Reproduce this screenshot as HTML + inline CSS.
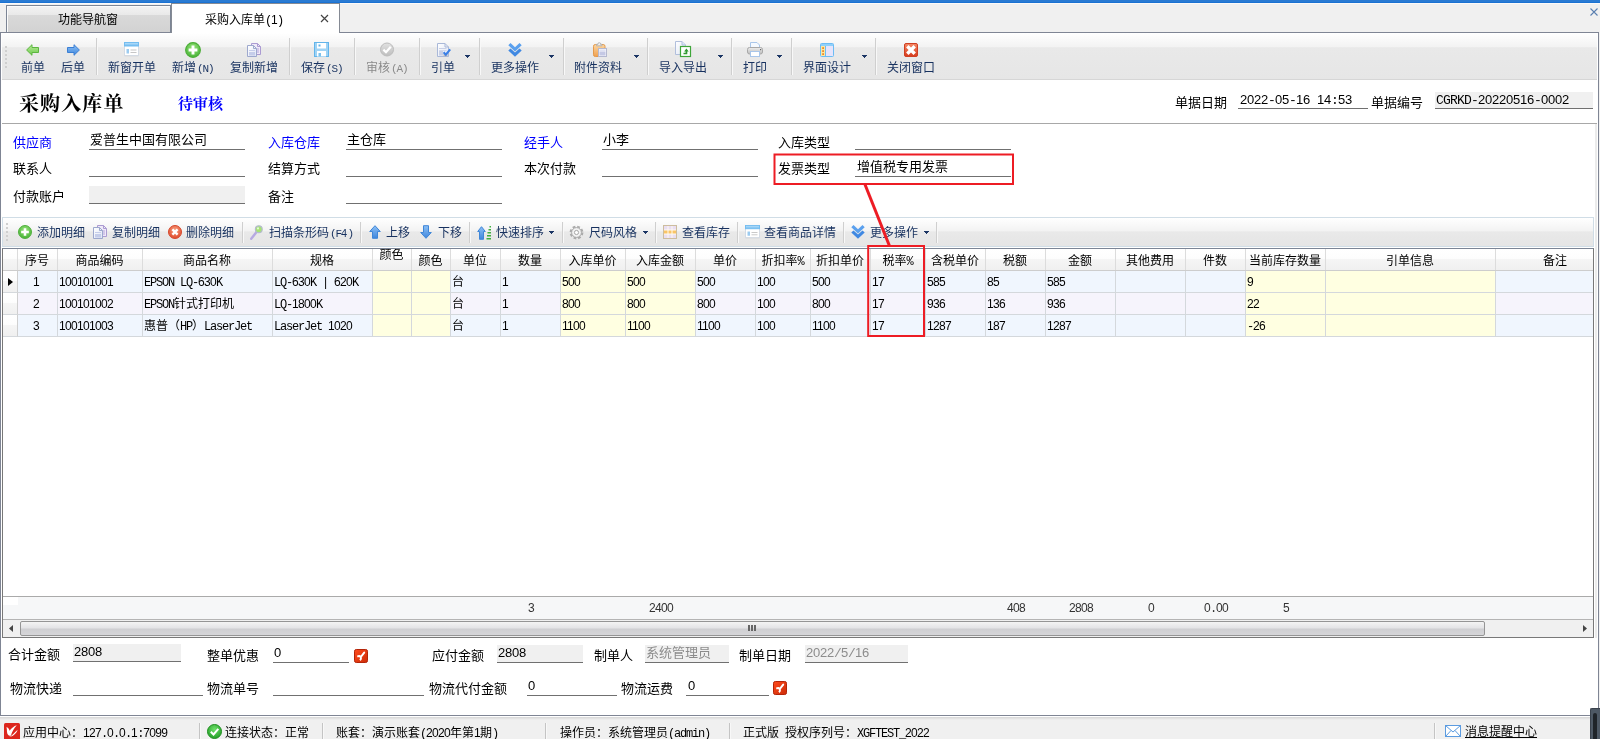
<!DOCTYPE html>
<html lang="zh-CN"><head><meta charset="utf-8"><title>采购入库单</title><style>
*{box-sizing:border-box;margin:0;padding:0}
html,body{width:1600px;height:739px;overflow:hidden}
body{background:#f0f0f0;position:relative;will-change:transform;font-family:"Liberation Sans","Noto Sans CJK SC","WenQuanYi Zen Hei",sans-serif;font-size:12px;color:#000;line-height:14px}
.a{position:absolute;white-space:nowrap}
.n{font-family:"Liberation Mono","DejaVu Sans Mono",monospace;letter-spacing:-1.2px}
.d{font-family:"Liberation Sans",sans-serif;letter-spacing:-0.67px}
.f13{font-size:13px;line-height:15px}
.f13 .d{letter-spacing:-0.23px}
.f13 .n{letter-spacing:-0.8px}
.tb{color:#17315f}
.tb .n{font-size:11px;letter-spacing:-1.1px;margin-left:1px}
.tb .d{font-size:11px;letter-spacing:-0.6px}
.sep{position:absolute;width:1px;background:#cfcfcf;border-right:0}
.sep:after{content:"";position:absolute;left:1px;top:0;width:1px;height:100%;background:#f8f8f8}
.ul{position:absolute;height:1px;background:#707070}
.gf{position:absolute;background:#f0f0f0}
.dd{position:absolute;width:5px;height:1px;background:#1b3564}
.dd:before{content:"";position:absolute;left:1px;top:1px;width:3px;height:1px;background:#1b3564}
.dd:after{content:"";position:absolute;left:2px;top:2px;width:1px;height:1px;background:#1b3564}
.blue{color:#0000ff}
svg{position:absolute;overflow:visible}
.hd{position:absolute;top:0;height:21px;text-align:center;line-height:24px;border-right:1px solid #dcdcdc;overflow:visible;white-space:nowrap}
.c{position:absolute;height:22px;line-height:23px;border-right:1px solid #d4d8dc;border-bottom:1px solid #d4d8dc;padding-left:1px;white-space:nowrap;overflow:hidden}
</style></head><body>
<div class="a" style="left:0;top:0;width:1600px;height:3px;background:linear-gradient(#2a7bd3 0,#2a7bd3 66%,#1a72d2 67%)"></div>
<div class="a" style="left:0;top:3px;width:1600px;height:1px;background:#fdfaf8"></div>
<svg style="left:1590px;top:8px" width="8" height="8" viewBox="0 0 8 8"><path d="M0.5 0.5L7.5 7.5M7.5 0.5L0.5 7.5" stroke="#5a7fb0" stroke-width="1.1" fill="none"/></svg>
<div class="a" style="left:6px;top:5px;width:165px;height:28px;border:1px solid #7c8595;border-bottom:0;background:linear-gradient(#f3f3f3 0,#e9e9e9 32%,#d9d9d9 33%,#d2d2d2 100%);box-shadow:inset 1px 1px 0 #fbfbfb"></div>
<div class="a" style="left:58px;top:13px;">功能导航窗</div>
<div class="a" style="left:0;top:32px;width:1599px;height:684px;background:#fff;border:1px solid #7f8594"></div>
<div class="a" style="left:171px;top:3px;width:169px;height:30px;border:1px solid #858a94;border-bottom:0;background:#fff"></div>
<div class="a" style="left:205px;top:13px;">采购入库单<span class="n">(</span><span class="d">1</span><span class="n">)</span></div>
<svg style="left:320px;top:14px" width="9" height="9" viewBox="0 0 9 9"><path d="M1 1L8 8M8 1L1 8" stroke="#444" stroke-width="1.2" fill="none"/></svg>
<div class="a" style="left:2px;top:33px;width:1595px;height:47px;background:linear-gradient(#ffffff 0,#f3f3f3 30%,#e9e9e9 32%,#e6e6e6 100%);border-bottom:1px solid #d6d6d6"></div>
<div class="a" style="left:5px;top:46px;width:2px;height:2px;background:#cfcfcf"></div>
<div class="a" style="left:5px;top:50px;width:2px;height:2px;background:#cfcfcf"></div>
<div class="a" style="left:5px;top:54px;width:2px;height:2px;background:#cfcfcf"></div>
<div class="a" style="left:5px;top:58px;width:2px;height:2px;background:#cfcfcf"></div>
<div class="a" style="left:5px;top:62px;width:2px;height:2px;background:#cfcfcf"></div>
<div class="a" style="left:5px;top:66px;width:2px;height:2px;background:#cfcfcf"></div>
<svg style="left:0;top:0" width="0" height="0"><defs>
<linearGradient id="gGreen" x1="0" y1="0" x2="0" y2="1"><stop offset="0" stop-color="#b9ec9a"/><stop offset="1" stop-color="#6cc84a"/></linearGradient>
<linearGradient id="gBlue" x1="0" y1="0" x2="0" y2="1"><stop offset="0" stop-color="#8cc0f6"/><stop offset="1" stop-color="#3f86dc"/></linearGradient>
<radialGradient id="gAdd" cx="0.5" cy="0.35" r="0.7"><stop offset="0" stop-color="#9be57e"/><stop offset="1" stop-color="#3fae30"/></radialGradient>
<radialGradient id="gDel" cx="0.5" cy="0.35" r="0.7"><stop offset="0" stop-color="#f9a080"/><stop offset="1" stop-color="#dd4426"/></radialGradient>
<radialGradient id="gOk" cx="0.5" cy="0.35" r="0.7"><stop offset="0" stop-color="#6fe06a"/><stop offset="1" stop-color="#1f9a24"/></radialGradient>
<linearGradient id="gGray" x1="0" y1="0" x2="0" y2="1"><stop offset="0" stop-color="#e2e2e2"/><stop offset="1" stop-color="#bdbdbd"/></linearGradient>
<linearGradient id="gSky" x1="0" y1="0" x2="0" y2="1"><stop offset="0" stop-color="#bfe3fb"/><stop offset="1" stop-color="#6db9ef"/></linearGradient>
<linearGradient id="gOrange" x1="0" y1="0" x2="0" y2="1"><stop offset="0" stop-color="#fbd7a4"/><stop offset="1" stop-color="#f0a04e"/></linearGradient>
<linearGradient id="gRed" x1="0" y1="0" x2="0" y2="1"><stop offset="0" stop-color="#f58a66"/><stop offset="1" stop-color="#d63a1c"/></linearGradient>
<linearGradient id="gPage" x1="0" y1="0" x2="1" y2="1"><stop offset="0" stop-color="#ffffff"/><stop offset="1" stop-color="#dfe5f4"/></linearGradient>
<linearGradient id="gBtn" x1="0" y1="0" x2="1" y2="1"><stop offset="0" stop-color="#ff4a1c"/><stop offset="1" stop-color="#cc2c08"/></linearGradient>
<linearGradient id="gPrn" x1="0" y1="0" x2="0" y2="1"><stop offset="0" stop-color="#ededed"/><stop offset="1" stop-color="#bcbcbc"/></linearGradient>
</defs></svg>
<svg style="left:26px;top:44px" width="13" height="12" viewBox="0 0 13 12"><path d="M0.6 6L6 0.7V3.5H12.5V8.5H6V11.3Z" fill="url(#gGreen)" stroke="#5db640" stroke-width="1"/></svg>
<div class="a tb" style="left:21px;top:61px;">前单</div>
<svg style="left:67px;top:44px" width="13" height="12" viewBox="0 0 13 12"><path d="M12.4 6L7 0.7V3.5H0.5V8.5H7V11.3Z" fill="url(#gBlue)" stroke="#3b7fd4" stroke-width="1"/></svg>
<div class="a tb" style="left:61px;top:61px;">后单</div>
<svg style="left:124px;top:42px" width="15" height="15" viewBox="0 0 15 15"><rect x="0.5" y="13" width="14" height="1.5" fill="#d9d9d9"/><rect x="0.5" y="0.5" width="14" height="13" fill="#fff" stroke="#d4dbe4"/><rect x="0.5" y="0.5" width="14" height="3.5" fill="url(#gSky)" stroke="#74bdf0"/><rect x="2.5" y="7" width="2.5" height="4.5" fill="#9ccbf0"/><rect x="6.5" y="7.5" width="6" height="1" fill="#c6c6c6"/><rect x="6.5" y="10" width="6" height="1" fill="#c6c6c6"/></svg>
<div class="a tb" style="left:108px;top:61px;">新窗开单</div>
<svg style="left:185px;top:42px" width="16" height="16" viewBox="0 0 16 16"><circle cx="8" cy="8" r="7.4" fill="url(#gAdd)" stroke="#4cae38" stroke-width="1.1"/><path d="M8 3.6V12.4M3.6 8H12.4" stroke="#fff" stroke-width="2.9"/></svg>
<div class="a tb" style="left:172px;top:61px;">新增<span class="n">(N)</span></div>
<svg style="left:247px;top:43px" width="14" height="14" viewBox="0 0 14 14"><path d="M4.5 0.5H10.5L13.5 3.5V11.5H4.5Z" fill="#efe9f8" stroke="#ab9bd2"/><path d="M10.5 0.5V3.5H13.5" fill="none" stroke="#ab9bd2"/><rect x="10.2" y="5" width="1.6" height="5" fill="#cbbfe6"/><path d="M0.5 2.5H6.5L9.5 5.5V13.5H0.5Z" fill="url(#gPage)" stroke="#9da8cd"/><path d="M6.5 2.5V5.5H9.5" fill="none" stroke="#9da8cd"/><rect x="2" y="7" width="6" height="1" fill="#c5cdea"/><rect x="2" y="9" width="6" height="3.5" fill="#c5cdea"/></svg>
<div class="a tb" style="left:230px;top:61px;">复制新增</div>
<svg style="left:314px;top:42px" width="15" height="15" viewBox="0 0 15 15"><rect x="0.5" y="0.5" width="14" height="14" fill="#9fd3f5" stroke="#62b4ea"/><rect x="3" y="1" width="9" height="5.5" fill="#fff"/><rect x="4.5" y="2.5" width="2" height="2" fill="#62b4ea"/><rect x="3" y="9" width="9" height="5.5" fill="#fff"/><rect x="4.5" y="11" width="2.5" height="3.5" fill="#7cc2ee"/></svg>
<div class="a tb" style="left:301px;top:61px;">保存<span class="n">(S)</span></div>
<svg style="left:380px;top:42px" width="14" height="15" viewBox="0 0 14 15"><circle cx="7" cy="7.5" r="6.5" fill="url(#gGray)" stroke="#bcbcbc"/><path d="M3.4 7.6L6 10.2L10.8 4.8" stroke="#fff" stroke-width="2.2" fill="none"/></svg>
<div class="a tb" style="left:366px;top:61px;color:#8a8a8a;">审核<span class="n">(A)</span></div>
<svg style="left:437px;top:43px" width="14" height="14" viewBox="0 0 14 14"><path d="M0.5 0.5H8L11.5 4V13.5H0.5Z" fill="url(#gPage)" stroke="#a9b8d8"/><path d="M8 0.5V4H11.5" fill="none" stroke="#a9b8d8"/><rect x="2" y="5" width="7.5" height="1" fill="#c8d0e6"/><rect x="2" y="7" width="7.5" height="1" fill="#d4daec"/><rect x="2" y="8" width="4" height="4.5" fill="#c8d0e6"/><rect x="6.5" y="11" width="4" height="2.5" fill="#b8b8c0"/><path d="M6.6 9.2L8.8 11.6L13.2 6.3" stroke="#3b80e6" stroke-width="2.1" fill="none"/></svg>
<div class="a tb" style="left:431px;top:61px;">引单</div>
<svg style="left:508px;top:43px" width="14" height="14" viewBox="0 0 14 14"><path d="M0.3 2.2L2.5 0L7 4.2L11.5 0L13.7 2.2L7 8.4Z" fill="#5aa0ee"/><path d="M0.3 7.6L2.5 5.4L7 9.6L11.5 5.4L13.7 7.6L7 13.8Z" fill="#3f88e2"/></svg>
<div class="a tb" style="left:491px;top:61px;">更多操作</div>
<svg style="left:593px;top:42px" width="14" height="15" viewBox="0 0 14 15"><rect x="0.5" y="2.5" width="11.5" height="12" rx="1.8" fill="url(#gOrange)" stroke="#e39a4c"/><path d="M3.5 3.8V2.3H5V1.2Q6.2 0.2 7.5 1.2V2.3H9V3.8Z" fill="#f1f1f1" stroke="#a9a9a9" stroke-width="0.8"/><rect x="5.5" y="6.5" width="8" height="8" fill="#f6f7fc" stroke="#b4b8cf"/><rect x="6.5" y="7.5" width="6" height="1.5" fill="#dfe2f2"/><rect x="6.5" y="9.5" width="6" height="4" fill="#c4c8e4"/></svg>
<div class="a tb" style="left:574px;top:61px;">附件资料</div>
<svg style="left:675px;top:41px" width="16" height="16" viewBox="0 0 16 16"><path d="M0.5 0.5H7L10.5 4V13.5H0.5Z" fill="url(#gPage)" stroke="#b1bfdc"/><path d="M7 0.5V4H10.5" fill="#dbe6fa" stroke="#b1bfdc"/><rect x="5.5" y="5.5" width="10" height="10" fill="#fdfffd" stroke="#3ea63a" stroke-width="1.2"/><path d="M8.5 13.2V11.8H10.6V10.6H9.1L11.4 7.6L13.7 10.6H12.3V13.2Z" fill="#2f9a2f"/></svg>
<div class="a tb" style="left:659px;top:61px;">导入导出</div>
<svg style="left:747px;top:42px" width="16" height="15" viewBox="0 0 16 15"><path d="M3.5 0.5H10L12.5 3V7H3.5Z" fill="#f4f9ff" stroke="#a9c6ea"/><rect x="0.5" y="5.5" width="15" height="6.5" rx="2" fill="url(#gPrn)" stroke="#a8a8a8"/><rect x="3.5" y="9.5" width="9" height="5" fill="#fff" stroke="#a9c6ea"/><rect x="13" y="7" width="1.2" height="1.2" fill="#666"/></svg>
<div class="a tb" style="left:743px;top:61px;">打印</div>
<svg style="left:820px;top:43px" width="14" height="14" viewBox="0 0 14 14"><rect x="0.5" y="0.5" width="13" height="13" rx="1" fill="#e6e4fb" stroke="#6cbcf4"/><rect x="1" y="1" width="12" height="2" fill="#8fd0fa"/><rect x="1" y="3" width="4" height="10" fill="#fbe7a0"/><rect x="5" y="3" width="1" height="10" fill="#6cbcf4"/><rect x="2.2" y="4.2" width="1.8" height="1.8" fill="#ee8a2c"/><rect x="2.2" y="7.2" width="1.8" height="1.8" fill="#ee8a2c"/><rect x="2.2" y="10.2" width="1.8" height="1.8" fill="#ee8a2c"/></svg>
<div class="a tb" style="left:803px;top:61px;">界面设计</div>
<svg style="left:904px;top:43px" width="14" height="14" viewBox="0 0 14 14"><rect x="0.5" y="0.5" width="13" height="13" rx="1.5" fill="url(#gRed)" stroke="#cf3f22"/><path d="M3.3 3.3L10.7 10.7M10.7 3.3L3.3 10.7" stroke="#fff" stroke-width="3.4"/></svg>
<div class="a tb" style="left:887px;top:61px;">关闭窗口</div>
<div class="sep" style="left:96px;top:38px;height:37px"></div>
<div class="sep" style="left:289px;top:38px;height:37px"></div>
<div class="sep" style="left:354px;top:38px;height:37px"></div>
<div class="sep" style="left:419px;top:38px;height:37px"></div>
<div class="sep" style="left:479px;top:38px;height:37px"></div>
<div class="sep" style="left:563px;top:38px;height:37px"></div>
<div class="sep" style="left:647px;top:38px;height:37px"></div>
<div class="sep" style="left:731px;top:38px;height:37px"></div>
<div class="sep" style="left:791px;top:38px;height:37px"></div>
<div class="sep" style="left:875px;top:38px;height:37px"></div>
<div class="dd" style="left:465px;top:55px"></div>
<div class="dd" style="left:549px;top:55px"></div>
<div class="dd" style="left:634px;top:55px"></div>
<div class="dd" style="left:718px;top:55px"></div>
<div class="dd" style="left:777px;top:55px"></div>
<div class="dd" style="left:862px;top:55px"></div>
<div class="a" style="left:19px;top:91px;font:bold 20px/26px 'Liberation Serif','Noto Serif CJK SC',serif;letter-spacing:1.1px">采购入库单</div>
<div class="a" style="left:178px;top:94px;font:bold 15px/20px 'Liberation Serif','Noto Serif CJK SC',serif;color:#0000ff">待审核</div>
<div class="a f13" style="left:1175px;top:95px">单据日期</div>
<div class="a f13" style="left:1240px;top:92px"><span class="d">2022</span><span class="n">-</span><span class="d">05</span><span class="n">-</span><span class="d">16</span><span class="n"> </span><span class="d">14</span><span class="n">:</span><span class="d">53</span></div>
<div class="ul" style="left:1238px;top:108px;width:130px"></div>
<div class="a f13" style="left:1371px;top:95px">单据编号</div>
<div class="gf" style="left:1435px;top:92px;width:158px;height:16px"></div>
<div class="a f13" style="left:1436px;top:92px"><span class="n">CGRKD-</span><span class="d">20220516</span><span class="n">-</span><span class="d">0002</span></div>
<div class="ul" style="left:1435px;top:108px;width:158px"></div>
<div class="a" style="left:2px;top:123px;width:1595px;height:1px;background:#a8a8a8"></div>
<div class="a" style="left:1595px;top:124px;width:2px;height:514px;background:#ebebeb"></div>
<div class="a f13 blue" style="left:13px;top:135px">供应商</div>
<div class="a f13" style="left:90px;top:132px">爱普生中国有限公司</div>
<div class="ul" style="left:89px;top:149px;width:156px"></div>
<div class="a f13" style="left:13px;top:161px">联系人</div>
<div class="ul" style="left:89px;top:176px;width:156px"></div>
<div class="a f13" style="left:13px;top:189px">付款账户</div>
<div class="gf" style="left:89px;top:186px;width:156px;height:17px"></div>
<div class="ul" style="left:89px;top:203px;width:156px"></div>
<div class="a f13 blue" style="left:268px;top:135px">入库仓库</div>
<div class="a f13" style="left:347px;top:132px">主仓库</div>
<div class="ul" style="left:346px;top:149px;width:156px"></div>
<div class="a f13" style="left:268px;top:161px">结算方式</div>
<div class="ul" style="left:346px;top:176px;width:156px"></div>
<div class="a f13" style="left:268px;top:189px">备注</div>
<div class="ul" style="left:346px;top:203px;width:156px"></div>
<div class="a f13 blue" style="left:524px;top:135px">经手人</div>
<div class="a f13" style="left:603px;top:132px">小李</div>
<div class="ul" style="left:602px;top:149px;width:156px"></div>
<div class="a f13" style="left:524px;top:161px">本次付款</div>
<div class="ul" style="left:602px;top:176px;width:156px"></div>
<div class="a f13" style="left:778px;top:135px">入库类型</div>
<div class="ul" style="left:855px;top:149px;width:156px"></div>
<div class="a f13" style="left:778px;top:161px">发票类型</div>
<div class="a f13" style="left:857px;top:159px">增值税专用发票</div>
<div class="ul" style="left:855px;top:176px;width:156px"></div>
<div class="a" style="left:2px;top:217px;width:1592px;height:30px;background:linear-gradient(#ffffff 0,#f3f3f3 45%,#e9e9e9 50%,#e5e5e5 100%);border:1px solid #d0dde6"></div>
<div class="a" style="left:6px;top:223px;width:2px;height:2px;background:#cfcfcf"></div>
<div class="a" style="left:6px;top:227px;width:2px;height:2px;background:#cfcfcf"></div>
<div class="a" style="left:6px;top:231px;width:2px;height:2px;background:#cfcfcf"></div>
<div class="a" style="left:6px;top:235px;width:2px;height:2px;background:#cfcfcf"></div>
<div class="a" style="left:6px;top:239px;width:2px;height:2px;background:#cfcfcf"></div>
<svg style="left:18px;top:225px" width="14" height="14" viewBox="0 0 16 16"><circle cx="8" cy="8" r="7.4" fill="url(#gAdd)" stroke="#4cae38" stroke-width="1.1"/><path d="M8 3.6V12.4M3.6 8H12.4" stroke="#fff" stroke-width="2.9"/></svg>
<div class="a tb" style="left:37px;top:226px">添加明细</div>
<svg style="left:93px;top:225px" width="14" height="14" viewBox="0 0 14 14"><path d="M4.5 0.5H10.5L13.5 3.5V11.5H4.5Z" fill="#efe9f8" stroke="#ab9bd2"/><path d="M10.5 0.5V3.5H13.5" fill="none" stroke="#ab9bd2"/><rect x="10.2" y="5" width="1.6" height="5" fill="#cbbfe6"/><path d="M0.5 2.5H6.5L9.5 5.5V13.5H0.5Z" fill="url(#gPage)" stroke="#9da8cd"/><path d="M6.5 2.5V5.5H9.5" fill="none" stroke="#9da8cd"/><rect x="2" y="7" width="6" height="1" fill="#c5cdea"/><rect x="2" y="9" width="6" height="3.5" fill="#c5cdea"/></svg>
<div class="a tb" style="left:112px;top:226px">复制明细</div>
<svg style="left:168px;top:225px" width="14" height="14" viewBox="0 0 14 14"><circle cx="7" cy="7" r="6.5" fill="url(#gDel)" stroke="#d6482c"/><path d="M4.4 4.4L9.6 9.6M9.6 4.4L4.4 9.6" stroke="#fff" stroke-width="2.3"/></svg>
<div class="a tb" style="left:186px;top:226px">删除明细</div>
<svg style="left:250px;top:225px" width="13" height="15" viewBox="0 0 13 15"><path d="M1.2 13.8L7 6.5" stroke="#b7a9e2" stroke-width="2.4" stroke-linecap="round" fill="none"/><circle cx="8.8" cy="4.2" r="3.4" fill="#a6e473" stroke="#b4bccb" stroke-width="1.2"/><circle cx="8" cy="3.4" r="1.1" fill="#e4f9d2"/></svg>
<div class="a tb" style="left:269px;top:226px">扫描条形码<span class="n">(F</span><span class="d">4</span><span class="n">)</span></div>
<svg style="left:369px;top:225px" width="12" height="14" viewBox="0 0 12 14"><path d="M6 0.7L11.3 6.5H8.5V13.3H3.5V6.5H0.7Z" fill="url(#gBlue)" stroke="#3f86d8"/></svg>
<div class="a tb" style="left:386px;top:226px">上移</div>
<svg style="left:420px;top:225px" width="12" height="14" viewBox="0 0 12 14"><path d="M6 13.3L11.3 7.5H8.5V0.7H3.5V7.5H0.7Z" fill="url(#gBlue)" stroke="#3f86d8"/></svg>
<div class="a tb" style="left:438px;top:226px">下移</div>
<svg style="left:477px;top:225px" width="15" height="15" viewBox="0 0 15 15"><path d="M4.5 1.7L8.3 6.5H6.5V14.3H2.5V6.5H0.7Z" fill="url(#gBlue)" stroke="#3f86d8"/><rect x="12.5" y="1" width="1.5" height="1.5" fill="#3fae3f"/><rect x="11.5" y="4" width="2.5" height="1.5" fill="#3fae3f"/><rect x="10.5" y="7" width="3.5" height="1.5" fill="#3fae3f"/><rect x="10" y="10" width="4" height="1.5" fill="#3fae3f"/><rect x="9.5" y="13" width="4.5" height="1.5" fill="#3fae3f"/></svg>
<div class="a tb" style="left:496px;top:226px">快速排序</div>
<svg style="left:569px;top:225px" width="15" height="15" viewBox="0 0 15 15"><circle cx="7.5" cy="7.5" r="5.6" fill="none" stroke="#aaaaaa" stroke-width="2.6" stroke-dasharray="2.6 1.8"/><circle cx="7.5" cy="7.5" r="4.9" fill="#f3f3f3" stroke="#a8a8a8" stroke-width="1"/><circle cx="7.5" cy="7.5" r="2.1" fill="#fdfdfd" stroke="#a8a8a8" stroke-width="1"/></svg>
<div class="a tb" style="left:589px;top:226px">尺码风格</div>
<svg style="left:663px;top:225px" width="14" height="14" viewBox="0 0 14 14"><rect x="0.5" y="0.5" width="13" height="13" fill="#e9def2" stroke="#cdbd9e"/><rect x="1" y="5" width="12" height="4" fill="#f9c467"/><path d="M5 1V13M9 1V13M1 5H13M1 9H13" stroke="#fffaf0" stroke-width="1"/></svg>
<div class="a tb" style="left:682px;top:226px">查看库存</div>
<svg style="left:745px;top:225px" width="15" height="14" viewBox="0 0 15 15" preserveAspectRatio="none"><rect x="0.5" y="13" width="14" height="1.5" fill="#d9d9d9"/><rect x="0.5" y="0.5" width="14" height="13" fill="#fff" stroke="#d4dbe4"/><rect x="0.5" y="0.5" width="14" height="3.5" fill="url(#gSky)" stroke="#74bdf0"/><rect x="2.5" y="7" width="2.5" height="4.5" fill="#9ccbf0"/><rect x="6.5" y="7.5" width="6" height="1" fill="#c6c6c6"/><rect x="6.5" y="10" width="6" height="1" fill="#c6c6c6"/></svg>
<div class="a tb" style="left:764px;top:226px">查看商品详情</div>
<svg style="left:851px;top:225px" width="14" height="14" viewBox="0 0 14 14"><path d="M0.3 2.2L2.5 0L7 4.2L11.5 0L13.7 2.2L7 8.4Z" fill="#5aa0ee"/><path d="M0.3 7.6L2.5 5.4L7 9.6L11.5 5.4L13.7 7.6L7 13.8Z" fill="#3f88e2"/></svg>
<div class="a tb" style="left:870px;top:226px">更多操作</div>
<div class="sep" style="left:242px;top:222px;height:21px"></div>
<div class="sep" style="left:360px;top:222px;height:21px"></div>
<div class="sep" style="left:469px;top:222px;height:21px"></div>
<div class="sep" style="left:562px;top:222px;height:21px"></div>
<div class="sep" style="left:655px;top:222px;height:21px"></div>
<div class="sep" style="left:737px;top:222px;height:21px"></div>
<div class="sep" style="left:843px;top:222px;height:21px"></div>
<div class="sep" style="left:936px;top:222px;height:21px"></div>
<div class="dd" style="left:549px;top:231px"></div>
<div class="dd" style="left:643px;top:231px"></div>
<div class="dd" style="left:924px;top:231px"></div>
<div class="a" id="grid" style="left:2px;top:248px;width:1592px;height:390px;border:1px solid #787878;border-top-color:#7c8595;background:#fff;overflow:hidden">
<div class="a" style="left:0;top:0;width:1600px;height:22px;background:linear-gradient(#ffffff 0,#fdfdfd 45%,#f5f5f5 50%,#f0f0f0 100%);border-bottom:1px solid #cdcdcd"></div>
<div class="hd" style="left:0;width:15px"></div>
<div class="hd" style="left:14px;width:41px;">序号</div>
<div class="hd" style="left:54px;width:86px;">商品编码</div>
<div class="hd" style="left:139px;width:131px;">商品名称</div>
<div class="hd" style="left:269px;width:101px;">规格</div>
<div class="hd" style="left:369px;width:40px;line-height:12px;">颜色</div>
<div class="hd" style="left:408px;width:40px;">颜色</div>
<div class="hd" style="left:447px;width:51px;">单位</div>
<div class="hd" style="left:497px;width:61px;">数量</div>
<div class="hd" style="left:557px;width:66px;">入库单价</div>
<div class="hd" style="left:622px;width:71px;">入库金额</div>
<div class="hd" style="left:692px;width:61px;">单价</div>
<div class="hd" style="left:752px;width:56px;">折扣率<span class="n">%</span></div>
<div class="hd" style="left:807px;width:61px;">折扣单价</div>
<div class="hd" style="left:867px;width:56px;">税率<span class="n">%</span></div>
<div class="hd" style="left:922px;width:61px;">含税单价</div>
<div class="hd" style="left:982px;width:61px;">税额</div>
<div class="hd" style="left:1042px;width:71px;">金额</div>
<div class="hd" style="left:1112px;width:71px;">其他费用</div>
<div class="hd" style="left:1182px;width:61px;">件数</div>
<div class="hd" style="left:1242px;width:81px;">当前库存数量</div>
<div class="hd" style="left:1322px;width:171px;">引单信息</div>
<div class="hd" style="left:1492px;width:121px;">备注</div>
<div class="c" style="left:0;top:22px;width:15px;background:linear-gradient(#ffffff 0,#fdfdfd 45%,#f5f5f5 50%,#f0f0f0 100%);border-right:1px solid #cfcfcf"></div>
<div class="c" style="left:15px;top:22px;width:40px;background:#f0f6fe;text-align:center;padding-left:0;padding-right:3px;"><span class="d">1</span></div>
<div class="c" style="left:55px;top:22px;width:85px;background:#f0f6fe;"><span class="d">100101001</span></div>
<div class="c" style="left:140px;top:22px;width:130px;background:#f0f6fe;"><span class="n">EPSON LQ-</span><span class="d">630</span><span class="n">K</span></div>
<div class="c" style="left:270px;top:22px;width:100px;background:#f0f6fe;"><span class="n">LQ-</span><span class="d">630</span><span class="n">K | </span><span class="d">620</span><span class="n">K</span></div>
<div class="c" style="left:370px;top:22px;width:39px;background:#ffffe1;"></div>
<div class="c" style="left:409px;top:22px;width:39px;background:#ffffe1;"></div>
<div class="c" style="left:448px;top:22px;width:50px;background:#f0f6fe;">台</div>
<div class="c" style="left:498px;top:22px;width:60px;background:#f0f6fe;"><span class="d">1</span></div>
<div class="c" style="left:558px;top:22px;width:65px;background:#ffffe1;"><span class="d">500</span></div>
<div class="c" style="left:623px;top:22px;width:70px;background:#ffffe1;"><span class="d">500</span></div>
<div class="c" style="left:693px;top:22px;width:60px;background:#f0f6fe;"><span class="d">500</span></div>
<div class="c" style="left:753px;top:22px;width:55px;background:#f0f6fe;"><span class="d">100</span></div>
<div class="c" style="left:808px;top:22px;width:60px;background:#f0f6fe;"><span class="d">500</span></div>
<div class="c" style="left:868px;top:22px;width:55px;background:#f0f6fe;"><span class="d">17</span></div>
<div class="c" style="left:923px;top:22px;width:60px;background:#f0f6fe;"><span class="d">585</span></div>
<div class="c" style="left:983px;top:22px;width:60px;background:#f0f6fe;"><span class="d">85</span></div>
<div class="c" style="left:1043px;top:22px;width:70px;background:#f0f6fe;"><span class="d">585</span></div>
<div class="c" style="left:1113px;top:22px;width:70px;background:#f0f6fe;"></div>
<div class="c" style="left:1183px;top:22px;width:60px;background:#f0f6fe;"></div>
<div class="c" style="left:1243px;top:22px;width:80px;background:#ffffe1;"><span class="d">9</span></div>
<div class="c" style="left:1323px;top:22px;width:170px;background:#ffffe1;"></div>
<div class="c" style="left:1493px;top:22px;width:120px;background:#f0f6fe;"></div>
<div class="c" style="left:0;top:44px;width:15px;background:linear-gradient(#ffffff 0,#fdfdfd 45%,#f5f5f5 50%,#f0f0f0 100%);border-right:1px solid #cfcfcf"></div>
<div class="c" style="left:15px;top:44px;width:40px;background:#f6f4fc;text-align:center;padding-left:0;padding-right:3px;"><span class="d">2</span></div>
<div class="c" style="left:55px;top:44px;width:85px;background:#f6f4fc;"><span class="d">100101002</span></div>
<div class="c" style="left:140px;top:44px;width:130px;background:#f6f4fc;"><span class="n">EPSON</span>针式打印机</div>
<div class="c" style="left:270px;top:44px;width:100px;background:#f6f4fc;"><span class="n">LQ-</span><span class="d">1800</span><span class="n">K</span></div>
<div class="c" style="left:370px;top:44px;width:39px;background:#ffffe1;"></div>
<div class="c" style="left:409px;top:44px;width:39px;background:#ffffe1;"></div>
<div class="c" style="left:448px;top:44px;width:50px;background:#f6f4fc;">台</div>
<div class="c" style="left:498px;top:44px;width:60px;background:#f6f4fc;"><span class="d">1</span></div>
<div class="c" style="left:558px;top:44px;width:65px;background:#ffffe1;"><span class="d">800</span></div>
<div class="c" style="left:623px;top:44px;width:70px;background:#ffffe1;"><span class="d">800</span></div>
<div class="c" style="left:693px;top:44px;width:60px;background:#f6f4fc;"><span class="d">800</span></div>
<div class="c" style="left:753px;top:44px;width:55px;background:#f6f4fc;"><span class="d">100</span></div>
<div class="c" style="left:808px;top:44px;width:60px;background:#f6f4fc;"><span class="d">800</span></div>
<div class="c" style="left:868px;top:44px;width:55px;background:#f6f4fc;"><span class="d">17</span></div>
<div class="c" style="left:923px;top:44px;width:60px;background:#f6f4fc;"><span class="d">936</span></div>
<div class="c" style="left:983px;top:44px;width:60px;background:#f6f4fc;"><span class="d">136</span></div>
<div class="c" style="left:1043px;top:44px;width:70px;background:#f6f4fc;"><span class="d">936</span></div>
<div class="c" style="left:1113px;top:44px;width:70px;background:#f6f4fc;"></div>
<div class="c" style="left:1183px;top:44px;width:60px;background:#f6f4fc;"></div>
<div class="c" style="left:1243px;top:44px;width:80px;background:#ffffe1;"><span class="d">22</span></div>
<div class="c" style="left:1323px;top:44px;width:170px;background:#ffffe1;"></div>
<div class="c" style="left:1493px;top:44px;width:120px;background:#f6f4fc;"></div>
<div class="c" style="left:0;top:66px;width:15px;background:linear-gradient(#ffffff 0,#fdfdfd 45%,#f5f5f5 50%,#f0f0f0 100%);border-right:1px solid #cfcfcf"></div>
<div class="c" style="left:15px;top:66px;width:40px;background:#f0f6fe;text-align:center;padding-left:0;padding-right:3px;"><span class="d">3</span></div>
<div class="c" style="left:55px;top:66px;width:85px;background:#f0f6fe;"><span class="d">100101003</span></div>
<div class="c" style="left:140px;top:66px;width:130px;background:#f0f6fe;">惠普（<span class="n">HP</span>）<span class="n">LaserJet</span></div>
<div class="c" style="left:270px;top:66px;width:100px;background:#f0f6fe;"><span class="n">LaserJet </span><span class="d">1020</span></div>
<div class="c" style="left:370px;top:66px;width:39px;background:#ffffe1;"></div>
<div class="c" style="left:409px;top:66px;width:39px;background:#ffffe1;"></div>
<div class="c" style="left:448px;top:66px;width:50px;background:#f0f6fe;">台</div>
<div class="c" style="left:498px;top:66px;width:60px;background:#f0f6fe;"><span class="d">1</span></div>
<div class="c" style="left:558px;top:66px;width:65px;background:#ffffe1;"><span class="d">1100</span></div>
<div class="c" style="left:623px;top:66px;width:70px;background:#ffffe1;"><span class="d">1100</span></div>
<div class="c" style="left:693px;top:66px;width:60px;background:#f0f6fe;"><span class="d">1100</span></div>
<div class="c" style="left:753px;top:66px;width:55px;background:#f0f6fe;"><span class="d">100</span></div>
<div class="c" style="left:808px;top:66px;width:60px;background:#f0f6fe;"><span class="d">1100</span></div>
<div class="c" style="left:868px;top:66px;width:55px;background:#f0f6fe;"><span class="d">17</span></div>
<div class="c" style="left:923px;top:66px;width:60px;background:#f0f6fe;"><span class="d">1287</span></div>
<div class="c" style="left:983px;top:66px;width:60px;background:#f0f6fe;"><span class="d">187</span></div>
<div class="c" style="left:1043px;top:66px;width:70px;background:#f0f6fe;"><span class="d">1287</span></div>
<div class="c" style="left:1113px;top:66px;width:70px;background:#f0f6fe;"></div>
<div class="c" style="left:1183px;top:66px;width:60px;background:#f0f6fe;"></div>
<div class="c" style="left:1243px;top:66px;width:80px;background:#ffffe1;"><span class="n">-</span><span class="d">26</span></div>
<div class="c" style="left:1323px;top:66px;width:170px;background:#ffffe1;"></div>
<div class="c" style="left:1493px;top:66px;width:120px;background:#f0f6fe;"></div>
<svg style="left:5px;top:29px" width="5" height="8" viewBox="0 0 5 9" preserveAspectRatio="none"><path d="M0 0L5 4.5L0 9Z" fill="#000"/></svg>
<div class="a" style="left:0;top:347px;width:1600px;height:24px;background:#f6f7f8;border-top:1px solid #aaaaaa;border-bottom:1px solid #b4b4b4"></div>
<div class="a" style="left:0;top:348px;width:15px;height:8px;background:#fff"></div>
<div class="a" style="left:498px;top:348px;width:60px;text-align:center;color:#333;line-height:22px"><span class="d">3</span></div>
<div class="a" style="left:623px;top:348px;width:70px;text-align:center;color:#333;line-height:22px"><span class="d">2400</span></div>
<div class="a" style="left:983px;top:348px;width:60px;text-align:center;color:#333;line-height:22px"><span class="d">408</span></div>
<div class="a" style="left:1043px;top:348px;width:70px;text-align:center;color:#333;line-height:22px"><span class="d">2808</span></div>
<div class="a" style="left:1113px;top:348px;width:70px;text-align:center;color:#333;line-height:22px"><span class="d">0</span></div>
<div class="a" style="left:1183px;top:348px;width:60px;text-align:center;color:#333;line-height:22px"><span class="d">0</span><span class="n">.</span><span class="d">00</span></div>
<div class="a" style="left:1243px;top:348px;width:80px;text-align:center;color:#333;line-height:22px"><span class="d">5</span></div>
<div class="a" style="left:0;top:371px;width:1600px;height:17px;background:#f0f0f0"></div>
<div class="a" style="left:17px;top:372px;width:1465px;height:15px;border:1px solid #959595;border-radius:2px;background:linear-gradient(#f4f4f4 0,#e4e4e6 45%,#cfcfd2 55%,#d6d6d9 100%)"></div>
<svg style="left:6px;top:376px" width="4" height="7" viewBox="0 0 4 7"><path d="M4 0L0 3.5L4 7Z" fill="#444"/></svg>
<svg style="left:1580px;top:376px" width="4" height="7" viewBox="0 0 4 7"><path d="M0 0L4 3.5L0 7Z" fill="#444"/></svg>
<div class="a" style="left:745px;top:376px;width:2px;height:6px;background:#666"></div>
<div class="a" style="left:748px;top:376px;width:2px;height:6px;background:#666"></div>
<div class="a" style="left:751px;top:376px;width:2px;height:6px;background:#666"></div>
</div>
<div class="a f13" style="left:8px;top:647px">合计金额</div>
<div class="gf" style="left:73px;top:644px;width:108px;height:17px"></div>
<div class="a f13" style="left:74px;top:644px"><span class="d">2808</span></div>
<div class="ul" style="left:73px;top:661px;width:108px"></div>
<div class="a f13" style="left:207px;top:648px">整单优惠</div>
<div class="a f13" style="left:274px;top:645px"><span class="d">0</span></div>
<div class="ul" style="left:273px;top:662px;width:76px"></div>
<div class="a f13" style="left:432px;top:648px">应付金额</div>
<div class="gf" style="left:497px;top:645px;width:86px;height:17px"></div>
<div class="a f13" style="left:498px;top:645px"><span class="d">2808</span></div>
<div class="ul" style="left:497px;top:662px;width:86px"></div>
<div class="a f13" style="left:594px;top:648px">制单人</div>
<div class="gf" style="left:645px;top:645px;width:84px;height:17px"></div>
<div class="a f13" style="left:646px;top:645px;color:#8c8c8c">系统管理员</div>
<div class="ul" style="left:645px;top:662px;width:84px"></div>
<div class="a f13" style="left:739px;top:648px">制单日期</div>
<div class="gf" style="left:805px;top:645px;width:103px;height:17px"></div>
<div class="a f13" style="left:806px;top:645px;color:#8c8c8c"><span class="d">2022</span><span class="n">/</span><span class="d">5</span><span class="n">/</span><span class="d">16</span></div>
<div class="ul" style="left:805px;top:662px;width:103px"></div>
<div class="a f13" style="left:10px;top:681px">物流快递</div>
<div class="ul" style="left:73px;top:695px;width:130px"></div>
<div class="a f13" style="left:207px;top:681px">物流单号</div>
<div class="ul" style="left:273px;top:695px;width:151px"></div>
<div class="a f13" style="left:429px;top:681px">物流代付金额</div>
<div class="a f13" style="left:528px;top:678px"><span class="d">0</span></div>
<div class="ul" style="left:527px;top:695px;width:90px"></div>
<div class="a f13" style="left:621px;top:681px">物流运费</div>
<div class="a f13" style="left:688px;top:678px"><span class="d">0</span></div>
<div class="ul" style="left:686px;top:695px;width:83px"></div>
<svg style="left:354px;top:649px" width="14" height="14" viewBox="0 0 14 14"><rect x="0.5" y="0.5" width="13" height="13" rx="1.8" fill="url(#gBtn)" stroke="#b32408"/><path d="M10.2 3.6L6.8 8" stroke="#fff" stroke-width="2" stroke-linecap="round" fill="none"/><path d="M3.3 7.6Q5.6 6.4 6.7 8.1Q7.6 9.7 6 11.2" stroke="#fff" stroke-width="1.9" fill="none"/></svg>
<svg style="left:773px;top:681px" width="14" height="14" viewBox="0 0 14 14"><rect x="0.5" y="0.5" width="13" height="13" rx="1.8" fill="url(#gBtn)" stroke="#b32408"/><path d="M10.2 3.6L6.8 8" stroke="#fff" stroke-width="2" stroke-linecap="round" fill="none"/><path d="M3.3 7.6Q5.6 6.4 6.7 8.1Q7.6 9.7 6 11.2" stroke="#fff" stroke-width="1.9" fill="none"/></svg>
<div class="a" style="left:0;top:716px;width:1600px;height:23px;background:linear-gradient(#ffffff 0,#ffffff 1px,#d6d6d6 1px,#f0f0f0 4px)"></div>
<svg style="left:4px;top:723px" width="16" height="16" viewBox="0 0 16 16"><rect x="0" y="0" width="16" height="17" rx="1.5" fill="#dc261d"/><path d="M2.4 4.3C4 4.3 5 5.8 5.6 7.8C7.2 5.2 10 3 12.8 2.2C10.2 5 7.6 9 7 12.6C5 13.4 3.4 12 3 9C2.9 7 2.9 5.6 2.4 4.3Z" fill="#fff"/><path d="M13.6 6.8C12.4 10.6 9.2 13.6 5 13.9C8.6 12.8 10 9.6 13.6 6.8Z" fill="#fff"/></svg>
<div class="a" style="left:23px;top:726px">应用中心：<span class="d">127</span><span class="n">.</span><span class="d">0</span><span class="n">.</span><span class="d">0</span><span class="n">.</span><span class="d">1</span><span class="n">:</span><span class="d">7099</span></div>
<svg style="left:207px;top:724px" width="15" height="15" viewBox="0 0 15 15"><circle cx="7.5" cy="7.5" r="7" fill="url(#gOk)" stroke="#1f8f1f"/><path d="M3.8 7.8L6.5 10.5L11.3 4.8" stroke="#fff" stroke-width="2" fill="none"/></svg>
<div class="a" style="left:225px;top:726px">连接状态：正常</div>
<div class="a" style="left:336px;top:726px">账套：演示账套<span class="n">(</span><span class="d">2020</span>年第<span class="d">1</span>期<span class="n">)</span></div>
<div class="a" style="left:560px;top:726px">操作员：系统管理员<span class="n">(admin)</span></div>
<div class="a" style="left:743px;top:726px">正式版<span class="n"> </span>授权序列号：<span class="n">XGFTEST_</span><span class="d">2022</span></div>
<div class="sep" style="left:199px;top:723px;height:16px;background:#c4c4c4"></div>
<div class="sep" style="left:322px;top:723px;height:16px;background:#c4c4c4"></div>
<div class="sep" style="left:545px;top:723px;height:16px;background:#c4c4c4"></div>
<div class="sep" style="left:729px;top:723px;height:16px;background:#c4c4c4"></div>
<div class="sep" style="left:1434px;top:723px;height:16px;background:#c4c4c4"></div>
<svg style="left:1445px;top:725px" width="16" height="12" viewBox="0 0 16 12"><rect x="0.5" y="0.5" width="15" height="11" fill="#fff" stroke="#5b9be0"/><path d="M0.5 0.5L8 7L15.5 0.5M0.5 11.5L6 5.5M15.5 11.5L10 5.5" stroke="#5b9be0" fill="none"/></svg>
<div class="a" style="left:1465px;top:725px;text-decoration:underline">消息提醒中心</div>
<div class="a" style="left:1590px;top:708px;width:10px;height:31px;background:#4d5864;border:1px solid #3a424c;border-right:0;border-bottom:0;border-radius:2px 0 0 0"></div>
<div class="a" style="left:1593px;top:713px;width:4px;height:26px;background:#1f2429;border-radius:2px 2px 0 0"></div>
<svg style="left:0;top:0" width="1600" height="739" viewBox="0 0 1600 739"><rect x="774.5" y="154.5" width="238.5" height="29.5" fill="none" stroke="#ed1c24" stroke-width="2"/><rect x="868.2" y="246" width="55.8" height="90" fill="none" stroke="#ed1c24" stroke-width="2"/><path d="M865 184.5L889.5 246" stroke="#ed1c24" stroke-width="3" fill="none"/></svg>
</body></html>
